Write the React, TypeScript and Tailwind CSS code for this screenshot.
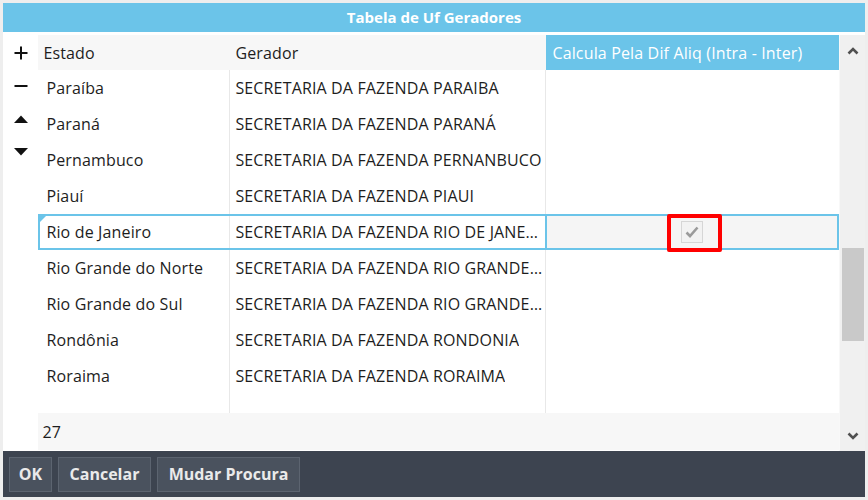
import React from "react";

const rows = [
  ["Paraíba", "SECRETARIA DA FAZENDA PARAIBA"],
  ["Paraná", "SECRETARIA DA FAZENDA PARANÁ"],
  ["Pernambuco", "SECRETARIA DA FAZENDA PERNANBUCO"],
  ["Piauí", "SECRETARIA DA FAZENDA PIAUI"],
  ["Rio de Janeiro", "SECRETARIA DA FAZENDA RIO DE JANEIRO"],
  ["Rio Grande do Norte", "SECRETARIA DA FAZENDA RIO GRANDE DO NORTE"],
  ["Rio Grande do Sul", "SECRETARIA DA FAZENDA RIO GRANDE DO SUL"],
  ["Rondônia", "SECRETARIA DA FAZENDA RONDONIA"],
  ["Roraima", "SECRETARIA DA FAZENDA RORAIMA"],
];

function Chevron({ up }: { up?: boolean }) {
  return (
    <svg width="12" height="8" viewBox="0 0 12 8">
      <path
        d={up ? "M1.5 6.5 L6 2 L10.5 6.5" : "M1.5 1.5 L6 6 L10.5 1.5"}
        fill="none"
        stroke="#505050"
        strokeWidth="2.6"
      />
    </svg>
  );
}

export default function App() {
  return (
    <div
      className="w-[868px] h-[500px] bg-[#eeeeee] px-[3px] pt-[3px] flex flex-col text-[16px] tracking-[0.15px] text-[#1d1d1d]"
      style={{ fontFamily: "'Open Sans', 'Noto Sans', sans-serif" }}
    >
      <div className="h-[29px] bg-[#6bc4e9] flex items-center justify-center text-white font-bold text-[15px] tracking-normal">
        Tabela de Uf Geradores
      </div>

      <div className="h-[419px] bg-white pt-[3px] flex">
        {/* toolbar */}
        <div className="w-[36px] flex flex-col items-center pt-[11px]">
          <div className="h-[32px] flex items-start justify-center">
            <svg width="14" height="14" viewBox="0 0 14 14">
              <path d="M7 0.5 V13.5 M0.5 7 H13.5" stroke="#111" strokeWidth="2" />
            </svg>
          </div>
          <div className="h-[34px] flex items-start justify-center pt-[6px]">
            <svg width="14" height="4" viewBox="0 0 14 4">
              <path d="M0.5 2 H13.5" stroke="#111" strokeWidth="2" />
            </svg>
          </div>
          <div className="h-[32px] flex items-start justify-center pt-[3px]">
            <svg width="14" height="8" viewBox="0 0 14 8">
              <path d="M0 8 L7 0.5 L14 8 Z" fill="#111" />
            </svg>
          </div>
          <div className="h-[32px] flex items-start justify-center pt-[4px]">
            <svg width="14" height="8" viewBox="0 0 14 8">
              <path d="M0 0 L14 0 L7 7.5 Z" fill="#111" />
            </svg>
          </div>
        </div>

        {/* grid */}
        <div className="w-[801px] flex flex-col relative">
          <div className="h-[35px] flex shrink-0">
            <div className="w-[192px] bg-[#f7f7f7] flex items-center pl-[5px]">Estado</div>
            <div className="w-[316px] bg-[#f7f7f7] flex items-center pl-[5px]">Gerador</div>
            <div className="w-[293px] bg-[#6bc4e9] text-white flex items-center pl-[6px]">
              Calcula Pela Dif Aliq (Intra - Inter)
            </div>
          </div>

          <div className="flex-1 flex flex-col">
            {rows.map(([estado, gerador], i) => {
              const sel = i === 4;
              return (
                <div
                  key={estado}
                  className={
                    sel
                      ? "h-[36px] flex border-2 border-[#6bc4e9] relative"
                      : "h-[36px] flex"
                  }
                >
                  {sel && (
                    <div className="absolute left-0 top-0 w-0 h-0 border-t-[6px] border-r-[6px] border-t-[#6bc4e9] border-r-transparent" />
                  )}
                  <div
                    className={
                      sel
                        ? "w-[190px] flex items-center pl-[6px] pb-[1px] border-r border-[#e8e8e8]"
                        : "w-[192px] flex items-center pl-[8px] pb-[1px] border-r border-[#e8e8e8]"
                    }
                  >
                    {estado}
                  </div>
                  <div className="w-[316px] flex items-center pl-[5px] pr-[3px] pb-[1px] border-r border-[#e8e8e8] overflow-hidden">
                    <span className="truncate">{gerador}</span>
                  </div>
                  <div
                    className={
                      sel
                        ? "flex-1 bg-[#f5f5f5] border-l-2 border-[#6bc4e9] -ml-[1px] flex items-center justify-center"
                        : "flex-1"
                    }
                  >
                    {sel && (
                      <div className="w-[22px] h-[22px] border border-[#d6d6d6] bg-[#f2f2f2] flex items-center justify-center">
                        <svg width="14" height="12" viewBox="0 0 14 12">
                          <path d="M1.5 6.5 L5 10 L12.5 1.5" fill="none" stroke="#9a9a9a" strokeWidth="2.6" />
                        </svg>
                      </div>
                    )}
                  </div>
                </div>
              );
            })}
            <div className="flex-1 flex">
              <div className="w-[192px] border-r border-[#e8e8e8]" />
              <div className="w-[316px] border-r border-[#e8e8e8]" />
              <div className="flex-1" />
            </div>
          </div>

          <div className="h-[37px] bg-[#f7f7f7] flex items-center pl-[4px] shrink-0">27</div>
          <div className="h-[1px] shrink-0" />

          <div className="absolute left-[629px] top-[179px] w-[55px] h-[38px] border-4 border-[#ff0000] rounded-[2px]" />
        </div>

        {/* scrollbar */}
        <div className="w-[26px] bg-[#f0f0f0] border-l border-[#f8f8f8] flex flex-col items-center">
          <div className="h-[30px] flex items-center justify-center pt-[2px]">
            <Chevron up />
          </div>
          <div className="h-[183px]" />
          <div className="w-[22px] h-[93px] bg-[#c9c9c9]" />
          <div className="flex-1" />
          <div className="h-[26px] flex items-center justify-center pb-[4px]">
            <Chevron />
          </div>
        </div>
      </div>

      <div className="h-[46px] bg-[#3d4450] flex items-center gap-[6px] px-[6px] tracking-normal">
        <button className="h-[35px] w-[43px] bg-[#4a525e] border border-[#5c6470] text-[#eaeaea] font-bold text-[16px]">
          OK
        </button>
        <button className="h-[35px] w-[93px] bg-[#4a525e] border border-[#5c6470] text-[#eaeaea] font-bold text-[16px]">
          Cancelar
        </button>
        <button className="h-[35px] w-[143px] bg-[#4a525e] border border-[#5c6470] text-[#eaeaea] font-bold text-[16px]">
          Mudar Procura
        </button>
      </div>
    </div>
  );
}
